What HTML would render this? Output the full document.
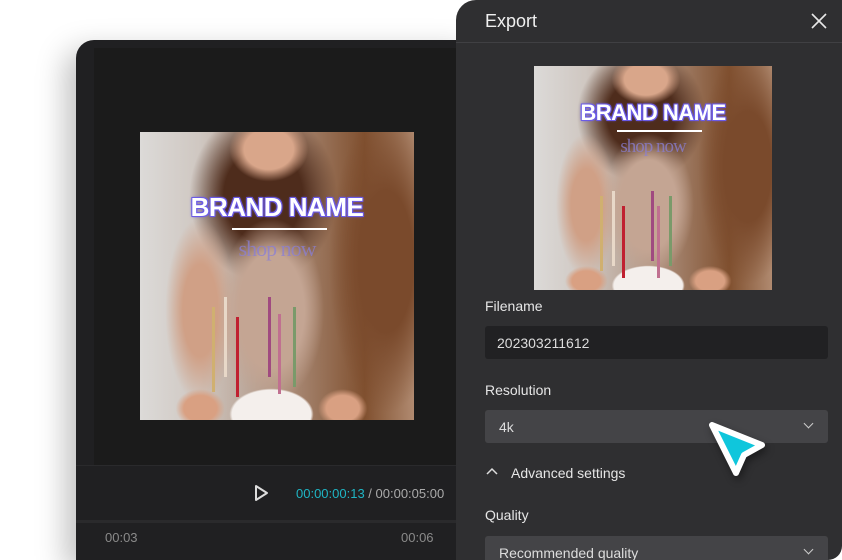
<!DOCTYPE html>
<html><head><meta charset="utf-8"><style>
*{margin:0;padding:0;box-sizing:border-box}
html,body{width:842px;height:560px;overflow:hidden}
body{background:#fff;position:relative;font-family:"Liberation Sans",sans-serif}
.editor{position:absolute;left:76px;top:40px;width:400px;height:520px;background:#202022;border-radius:18px 0 0 0;box-shadow:-10px 10px 30px rgba(0,0,0,.25)}
.stage{position:absolute;left:18px;top:8px;width:380px;height:417px;background:#1b1b1b}
.photo{position:absolute;overflow:hidden;background:
radial-gradient(ellipse 24% 14% at 48% 98%,#f4efec 60%,transparent 64%),
radial-gradient(ellipse 12% 9% at 22% 96%,#d9a082 50%,transparent 75%),
radial-gradient(ellipse 12% 9% at 74% 96%,#d9a082 50%,transparent 75%),
radial-gradient(ellipse 18% 14% at 47% 6%,#d9a68a 50%,transparent 80%),
radial-gradient(ellipse 24% 40% at 48% 62%,#c4a593 50%,transparent 80%),
radial-gradient(ellipse 16% 40% at 22% 62%,#d0a086 40%,transparent 80%),
radial-gradient(ellipse 28% 70% at 90% 45%,#7a4a2c 35%,transparent 75%),
radial-gradient(ellipse 36% 40% at 45% 22%,#4e2c1c 40%,transparent 75%),
linear-gradient(90deg,#dcdad8 0%,#cfc7c1 22%,#a98a76 55%,#80502f 82%,#b08a70 100%)}
.brand{position:absolute;left:0;right:0;text-align:center;color:#fff;font-weight:bold;font-family:"Liberation Sans",sans-serif;letter-spacing:-0.5px;text-shadow:0 0 2px #6c5ce7,0 0 3px #6c5ce7,1px 1px 0 #6c5ce7,-1px -1px 0 #6c5ce7,1px -1px 0 #6c5ce7,-1px 1px 0 #6c5ce7}
.line{position:absolute;height:2px;background:#fff}
.shop{position:absolute;left:0;right:0;text-align:center;color:#8a7fd6;font-family:"Liberation Serif",serif;opacity:.75;letter-spacing:-1px}
.candle{position:absolute;width:3px}
.panel{position:absolute;left:456px;top:0;width:386px;height:560px;background:#2f2f31;border-radius:20px 0 14px 0;overflow:hidden}
.hdr{height:43px;border-bottom:1px solid #404043;color:#f0f0f0;font-size:18px;padding:11px 0 0 29px}
.lbl{position:absolute;left:29px;color:#e6e6e6;font-size:14px}
.box{position:absolute;left:29px;width:343px;height:33px;border-radius:3px;font-size:14px;color:#ddd;padding:9px 0 0 12px}
.chev{position:absolute;right:16px;top:10px;width:7px;height:7px;border-right:1.5px solid #ccc;border-bottom:1.5px solid #ccc;transform:rotate(45deg)}
</style></head><body>
<div class="editor">
 <div class="stage"></div>
 <div class="photo" style="left:64px;top:92px;width:274px;height:288px">
  <div class="brand" style="top:60px;font-size:26px">BRAND NAME</div>
  <div class="line" style="left:92px;width:95px;top:96px"></div>
  <div class="shop" style="top:104px;font-size:22px">shop now</div>
  <div class="candle" style="left:72px;top:175px;height:85px;background:#d0b070"></div>
  <div class="candle" style="left:84px;top:165px;height:80px;background:#e8d8c8"></div>
  <div class="candle" style="left:96px;top:185px;height:80px;background:#c02030"></div>
  <div class="candle" style="left:128px;top:165px;height:80px;background:#a04a80"></div>
  <div class="candle" style="left:138px;top:182px;height:80px;background:#c07090"></div>
  <div class="candle" style="left:153px;top:175px;height:80px;background:#7a9a6a"></div>
 </div>
 <div style="position:absolute;left:0;top:425px;width:380px;height:1px;background:#2a2a2c"></div>
 <svg style="position:absolute;left:178px;top:444px" width="16" height="18"><path d="M2 2 L13 9 L2 16 Z" fill="none" stroke="#ddd" stroke-width="2" stroke-linejoin="round"/></svg>
 <div style="position:absolute;left:220px;top:446px;font-size:13px;color:#1fb5c4">00:00:00:13 <span style="color:#aaa">/ 00:00:05:00</span></div>
 <div style="position:absolute;left:0;top:480px;width:380px;height:3px;background:#2a2a2c"></div>
 <div style="position:absolute;left:29px;top:490px;font-size:13px;color:#8a8a8a">00:03</div>
 <div style="position:absolute;left:325px;top:490px;font-size:13px;color:#8a8a8a">00:06</div>
</div>
<div class="panel">
 <div class="hdr">Export</div>
 <svg style="position:absolute;left:354px;top:12px" width="18" height="18"><path d="M2 2L16 16M16 2L2 16" stroke="#e8e8e8" stroke-width="1.6"/></svg>
 <div class="photo" style="left:78px;top:66px;width:238px;height:224px">
  <div class="brand" style="top:34px;font-size:22px">BRAND NAME</div>
  <div class="line" style="left:83px;width:85px;top:64px"></div>
  <div class="shop" style="top:70px;font-size:19px">shop now</div>
  <div class="candle" style="left:66px;top:130px;height:75px;background:#d0b070"></div>
  <div class="candle" style="left:78px;top:125px;height:75px;background:#e8d8c8"></div>
  <div class="candle" style="left:88px;top:140px;height:72px;background:#c02030"></div>
  <div class="candle" style="left:117px;top:125px;height:70px;background:#a04a80"></div>
  <div class="candle" style="left:123px;top:140px;height:72px;background:#c07090"></div>
  <div class="candle" style="left:135px;top:130px;height:70px;background:#7a9a6a"></div>
 </div>
 <div class="lbl" style="top:298px">Filename</div>
 <div class="box" style="top:326px;background:#212123">202303211612</div>
 <div class="lbl" style="top:382px">Resolution</div>
 <div class="box" style="top:410px;background:#444447;padding-left:14px">4k<div class="chev"></div></div>
 <svg style="position:absolute;left:30px;top:467px" width="12" height="8"><path d="M1 7L6 2L11 7" fill="none" stroke="#ddd" stroke-width="1.5"/></svg>
 <div class="lbl" style="top:465px;left:55px">Advanced settings</div>
 <div class="lbl" style="top:507px">Quality</div>
 <div class="box" style="top:536px;background:#444447;padding-left:14px">Recommended quality<div class="chev"></div></div>
</div>
<svg style="position:absolute;left:700px;top:415px;filter:drop-shadow(2px 4px 4px rgba(0,0,0,.4))" width="75" height="70"><path d="M12 10 L62 30 L44 40 L36 58 Z" fill="#0fc6dc" stroke="#fff" stroke-width="6" stroke-linejoin="round"/></svg>
</body></html>
